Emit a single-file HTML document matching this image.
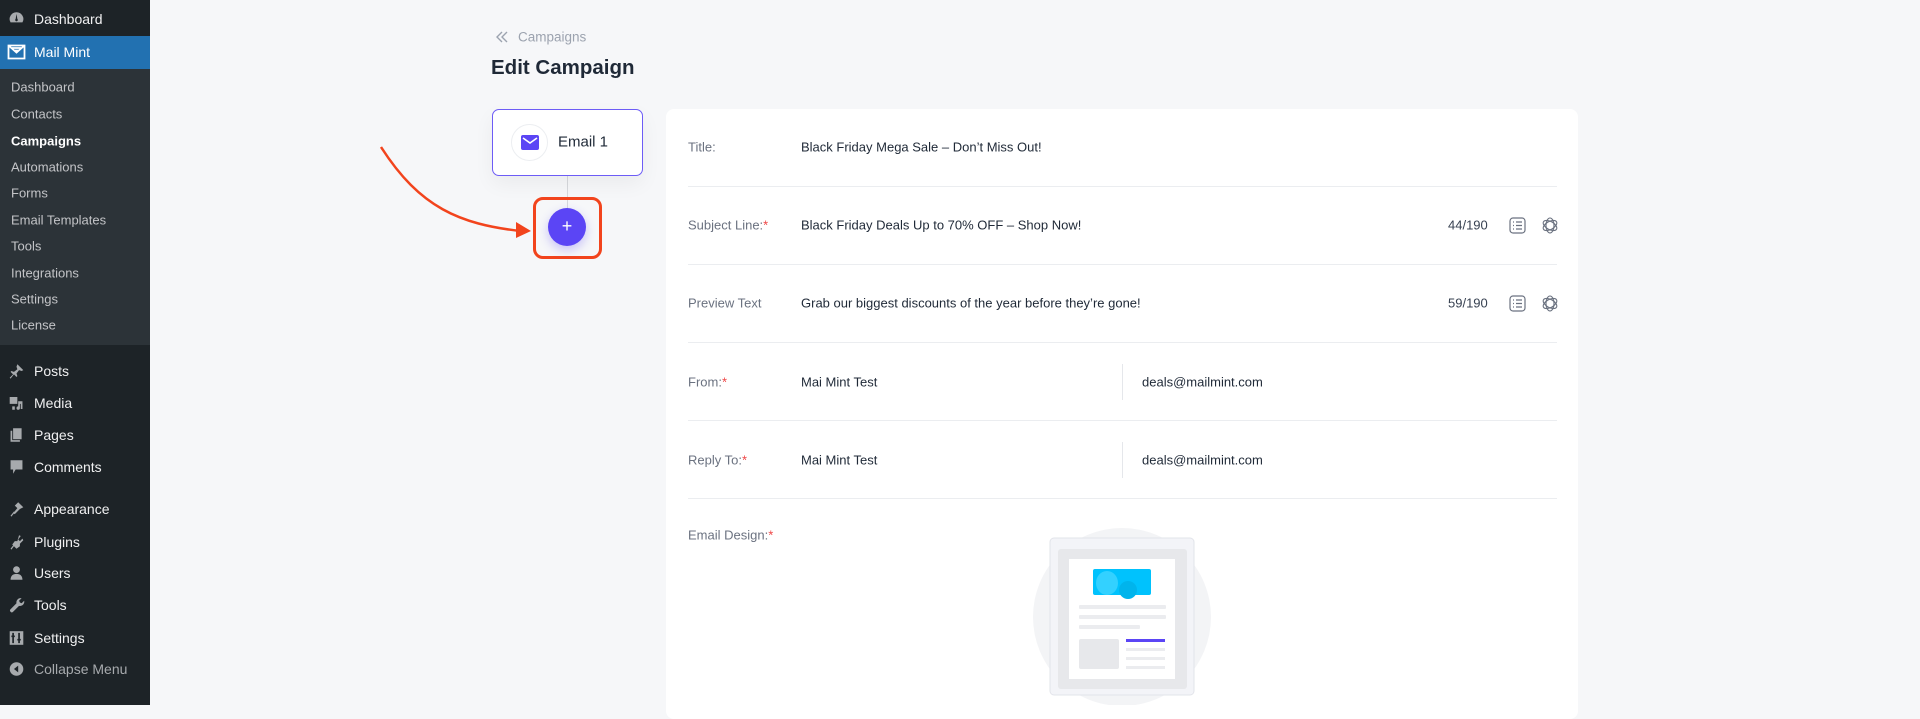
<!DOCTYPE html>
<html><head><meta charset="utf-8"><style>
*{margin:0;padding:0;box-sizing:border-box}
body{width:1920px;height:705px;overflow:hidden;background:#f6f7f9;font-family:"Liberation Sans",sans-serif;position:relative}
.sb{position:absolute;left:0;top:0;width:150px;height:705px;background:#1d2327}
.sub{position:absolute;left:0;top:69px;width:150px;height:276px;background:#2c3338}
.t{position:absolute;white-space:nowrap;transform:translateY(-50%)}
.m{left:34px;color:#f0f0f1;font-size:14px}
.s{left:11px;color:#c3c4c7;font-size:13px}
.ic{position:absolute;left:8px;width:17px;height:17px;transform:translateY(-50%);fill:#a7aaad}
.lab{position:absolute;left:688px;color:#6b7280;font-size:13px;transform:translateY(-50%);white-space:nowrap}
.val{position:absolute;color:#1f2937;font-size:13px;transform:translateY(-50%);white-space:nowrap}
.req{color:#ef4444}
.hr{position:absolute;left:688px;width:869px;height:1px;background:#ebedf0}
</style></head><body>
<div class="sb"></div>
<div style="position:absolute;left:0;top:36px;width:150px;height:33px;background:#2271b1"></div>
<div class="sub"></div>
<svg class="ic" style="top:19px" viewBox="0 0 20 20"><path d="M10 2a8 8 0 0 0-7 12h14A8 8 0 0 0 10 2zm0 2l1 6a1.5 1.5 0 1 1-2 0z"/></svg>
<div class="t m" style="top:19px">Dashboard</div>
<svg style="position:absolute;left:7px;top:44px" width="19" height="16" viewBox="0 0 19 16"><path d="M1.5 1.5h16v13h-16z M1.5 1.5l8 7 8-7 M5 4h9 M7 6.5h5" fill="none" stroke="#fff" stroke-width="1.8"/></svg>
<div class="t m" style="top:52px;color:#fff">Mail Mint</div>
<div class="t s" style="top:87px">Dashboard</div>
<div class="t s" style="top:114px">Contacts</div>
<div class="t s" style="top:141px;color:#fff;font-weight:bold">Campaigns</div>
<div class="t s" style="top:167px">Automations</div>
<div class="t s" style="top:193px">Forms</div>
<div class="t s" style="top:220px">Email Templates</div>
<div class="t s" style="top:246px">Tools</div>
<div class="t s" style="top:273px">Integrations</div>
<div class="t s" style="top:299px">Settings</div>
<div class="t s" style="top:325px">License</div>
<svg class="ic" style="top:371px" viewBox="0 0 20 20"><path d="M11 2l7 7-2 1-3-1-3 4 1 3-1 1-3-3-4 5-1-1 4-4-3-3 1-1 3 1 4-3-1-3z"/></svg>
<div class="t m" style="top:371px">Posts</div>
<svg class="ic" style="top:403px" viewBox="0 0 20 20"><path d="M2 3h9v8H2z M12 8h5v9h-2v-6h-1v5a2 2 0 1 1-2-2z M5 14h3v4H5z"/></svg>
<div class="t m" style="top:403px">Media</div>
<svg class="ic" style="top:435px" viewBox="0 0 20 20"><path d="M6 2h10v13H6z M3 5h2v11h9v2H3z"/></svg>
<div class="t m" style="top:435px">Pages</div>
<svg class="ic" style="top:467px" viewBox="0 0 20 20"><path d="M3 2h14v11H9l-3 5v-5H3z"/></svg>
<div class="t m" style="top:467px">Comments</div>
<svg class="ic" style="top:509px" viewBox="0 0 20 20"><path d="M12 2l6 6-4 2-6 6-2-1 5-6-3-3z M3 18l4-5 1 1-4 5z"/></svg>
<div class="t m" style="top:509px">Appearance</div>
<svg class="ic" style="top:542px" viewBox="0 0 20 20"><path d="M13 2l2 1-3 4 2 2 3-3 1 2-4 4v3l-4 3-5-5 3-4h3z M3 18l3-4 1 1-3 4z"/></svg>
<div class="t m" style="top:542px">Plugins</div>
<svg class="ic" style="top:573px" viewBox="0 0 20 20"><circle cx="10" cy="6" r="4"/><path d="M3 18c0-5 3-7 7-7s7 2 7 7z"/></svg>
<div class="t m" style="top:573px">Users</div>
<svg class="ic" style="top:605px" viewBox="0 0 20 20"><path d="M16 2l-3 3 1 2 2 1 3-3a5 5 0 0 1-6 6L6 18a2 2 0 0 1-3-3l7-7a5 5 0 0 1 6-6z"/></svg>
<div class="t m" style="top:605px">Tools</div>
<svg class="ic" style="top:638px" viewBox="0 0 20 20"><path d="M2 2h16v16H2z" /><path d="M6 4v12 M13 4v12 M4 8h4 M11 12h4" stroke="#1d2327" stroke-width="2"/></svg>
<div class="t m" style="top:638px">Settings</div>
<svg class="ic" style="top:669px" viewBox="0 0 20 20"><circle cx="10" cy="10" r="8"/><path d="M12 6v8l-5-4z" fill="#1d2327"/></svg>
<div class="t m" style="top:669px;color:#a7aaad">Collapse Menu</div>

<svg style="position:absolute;left:495px;top:31px" width="14" height="12" viewBox="0 0 14 12"><path d="M7 1L2 6l5 5M12 1L7 6l5 5" fill="none" stroke="#9ca3af" stroke-width="1.4"/></svg>
<div class="t" style="left:518px;top:37px;font-size:13.5px;color:#9ca3af">Campaigns</div>
<div class="t" style="left:491px;top:68px;font-size:20.5px;font-weight:bold;color:#1f2937">Edit Campaign</div>

<div style="position:absolute;left:567px;top:176px;width:1px;height:35px;background:#d6d8dc"></div>
<div style="position:absolute;left:492px;top:109px;width:151px;height:67px;background:#fff;border:1px solid #6d5cf6;border-radius:7px;box-shadow:0 8px 20px rgba(0,0,0,.05)"></div>
<div style="position:absolute;left:511px;top:124px;width:37px;height:37px;border-radius:50%;border:1px solid #eceef1;background:#fff"></div>
<svg style="position:absolute;left:521px;top:135px" width="18" height="15" viewBox="0 0 18 15"><rect width="18" height="15" rx="2" fill="#5b45f5"/><path d="M2 3l7 5 7-5" fill="none" stroke="#fff" stroke-width="1.6"/></svg>
<div class="t" style="left:558px;top:142px;font-size:15px;color:#1f2937">Email 1</div>

<div style="position:absolute;left:533px;top:197px;width:69px;height:62px;border:3px solid #f2441d;border-radius:10px"></div>
<div style="position:absolute;left:548px;top:208px;width:38px;height:38px;border-radius:50%;background:#5b45f5;box-shadow:0 4px 10px rgba(91,69,245,.3);color:#fff;font-size:18px;text-align:center;line-height:37px">+</div>
<svg style="position:absolute;left:370px;top:140px" width="170" height="110" viewBox="370 140 170 110"><path d="M381 147C420 208 460 224 520 231" fill="none" stroke="#f2441d" stroke-width="2.5"/><path d="M531 231l-15-9v16z" fill="#f2441d"/></svg>

<div style="position:absolute;left:666px;top:109px;width:912px;height:610px;background:#fff;border-radius:8px"></div>
<div class="lab" style="top:147px">Title:</div>
<div class="val" style="left:801px;top:147px">Black Friday Mega Sale – Don’t Miss Out!</div>
<div class="hr" style="top:186px"></div>
<div class="lab" style="top:225px">Subject Line:<span class="req">*</span></div>
<div class="val" style="left:801px;top:225px">Black Friday Deals Up to 70% OFF – Shop Now!</div>
<div class="hr" style="top:264px"></div>
<div class="lab" style="top:303px">Preview Text</div>
<div class="val" style="left:801px;top:303px">Grab our biggest discounts of the year before they’re gone!</div>
<div class="hr" style="top:342px"></div>
<div class="lab" style="top:382px">From:<span class="req">*</span></div>
<div class="val" style="left:801px;top:382px">Mai Mint Test</div>
<div style="position:absolute;left:1122px;top:364px;width:1px;height:36px;background:#e5e7eb"></div>
<div class="val" style="left:1142px;top:382px">deals@mailmint.com</div>
<div class="hr" style="top:420px"></div>
<div class="lab" style="top:460px">Reply To:<span class="req">*</span></div>
<div class="val" style="left:801px;top:460px">Mai Mint Test</div>
<div style="position:absolute;left:1122px;top:442px;width:1px;height:36px;background:#e5e7eb"></div>
<div class="val" style="left:1142px;top:460px">deals@mailmint.com</div>
<div class="hr" style="top:498px"></div>
<div class="lab" style="top:535px">Email Design:<span class="req">*</span></div>

<div class="val" style="left:1448px;top:225px;color:#374151">44/190</div>
<div class="val" style="left:1448px;top:303px;color:#374151">59/190</div>
<svg style="position:absolute;left:1509px;top:216px" width="50" height="19" viewBox="0 0 50 19"><rect x="1" y="2" width="15" height="15" rx="3" fill="none" stroke="#6b7280" stroke-width="1.2"/><path d="M4 6h1M7 6h6M4 9.5h1M7 9.5h6M4 13h1M7 13h6" stroke="#6b7280" stroke-width="1.2"/><g fill="none" stroke="#6b7280" stroke-width="1.1" transform="translate(41,9.5)"><ellipse rx="7.5" ry="4" transform="rotate(30)"/><ellipse rx="7.5" ry="4" transform="rotate(90)"/><ellipse rx="7.5" ry="4" transform="rotate(150)"/></g></svg>
<svg style="position:absolute;left:1509px;top:294px" width="50" height="19" viewBox="0 0 50 19"><rect x="1" y="2" width="15" height="15" rx="3" fill="none" stroke="#6b7280" stroke-width="1.2"/><path d="M4 6h1M7 6h6M4 9.5h1M7 9.5h6M4 13h1M7 13h6" stroke="#6b7280" stroke-width="1.2"/><g fill="none" stroke="#6b7280" stroke-width="1.1" transform="translate(41,9.5)"><ellipse rx="7.5" ry="4" transform="rotate(30)"/><ellipse rx="7.5" ry="4" transform="rotate(90)"/><ellipse rx="7.5" ry="4" transform="rotate(150)"/></g></svg>

<svg style="position:absolute;left:1030px;top:525px" width="190" height="180" viewBox="1030 525 190 180">
<circle cx="1122" cy="617" r="89" fill="#f3f4f6"/>
<rect x="1050" y="538" width="144" height="157" rx="4" fill="#f3f4f8" stroke="#e2e4ea"/>
<rect x="1058" y="549" width="129" height="140" rx="3" fill="#e7e8eb"/>
<rect x="1069" y="559" width="106" height="120" fill="#fff"/>
<rect x="1093" y="569" width="58" height="26" rx="2" fill="#00c2fd"/>
<ellipse cx="1107" cy="583" rx="11" ry="12" fill="#40d4ff" opacity=".8"/>
<ellipse cx="1128" cy="590" rx="9" ry="9" fill="#00b4ec"/>
<rect x="1079" y="605" width="87" height="4" rx="1" fill="#ebecef"/>
<rect x="1079" y="615" width="87" height="4" rx="1" fill="#ebecef"/>
<rect x="1079" y="625" width="61" height="4" rx="1" fill="#ebecef"/>
<rect x="1079" y="639" width="40" height="30" rx="2" fill="#e7e8eb"/>
<rect x="1126" y="639" width="39" height="3" fill="#5b45f5"/>
<rect x="1126" y="648" width="39" height="3" fill="#ebecef"/>
<rect x="1126" y="657" width="39" height="3" fill="#ebecef"/>
<rect x="1126" y="666" width="39" height="3" fill="#ebecef"/>
</svg>
</body></html>
